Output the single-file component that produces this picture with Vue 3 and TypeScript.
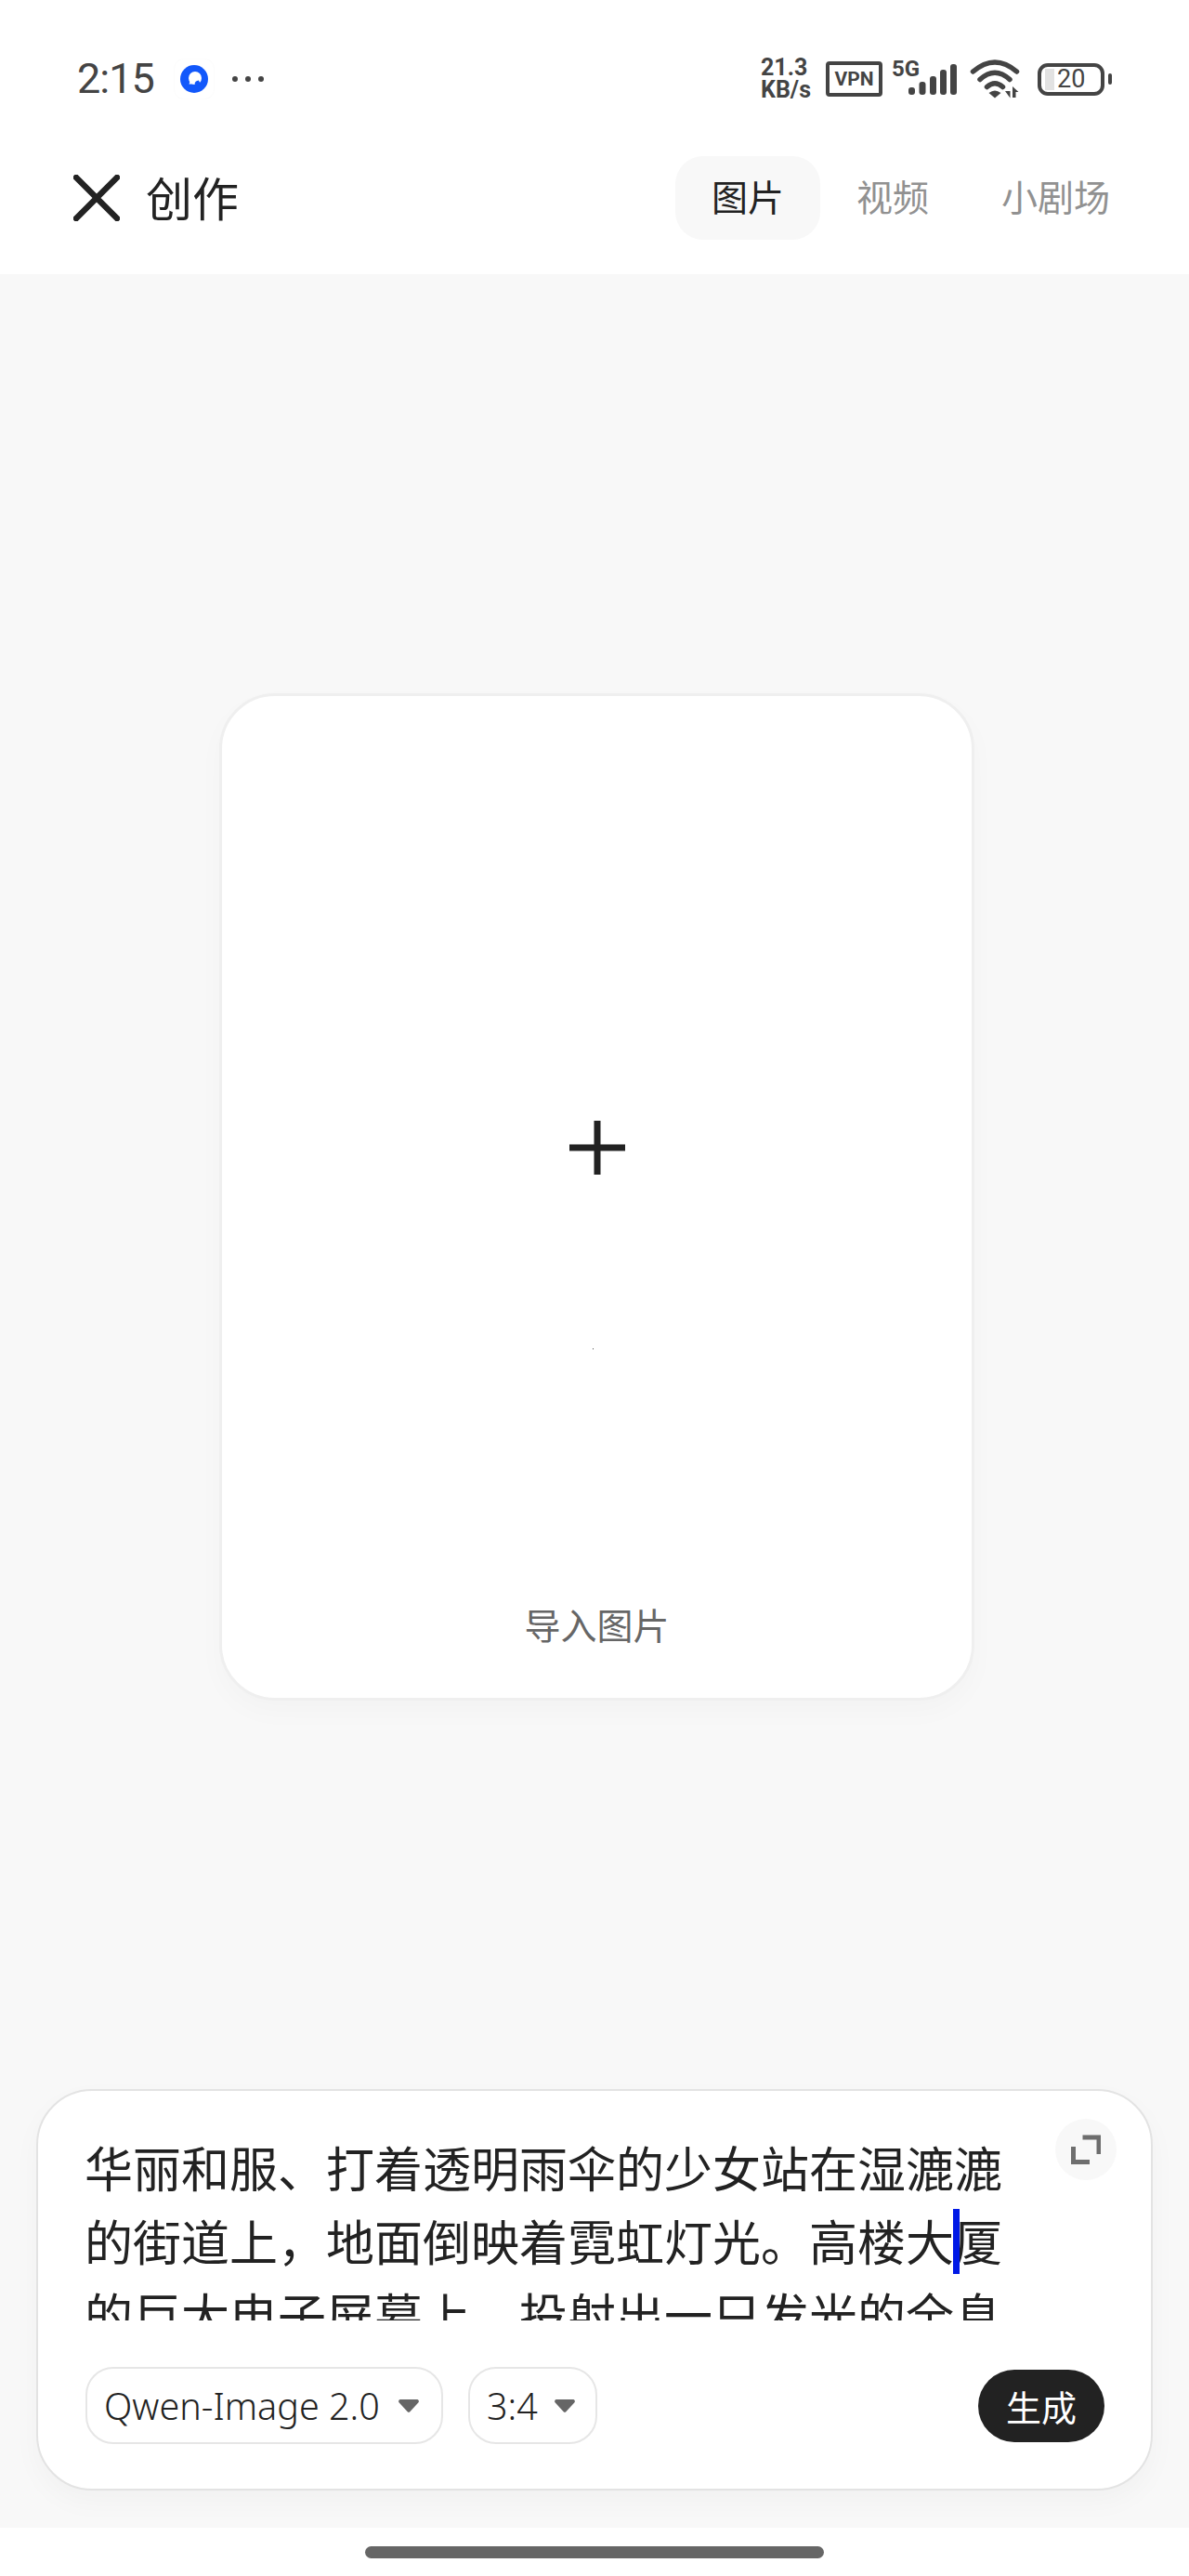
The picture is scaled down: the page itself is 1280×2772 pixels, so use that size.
<template>
  <div class="page">
    <div class="top">
      <div class="status">
        <span class="status__time">2:15</span>
        <span class="status__app">
          <svg width="42" height="42" viewBox="0 0 42 42">
            <circle cx="21" cy="21" r="15" fill="#1258fb" />
            <circle cx="22" cy="20" r="7" fill="#fff" />
            <path d="M15.5 26.5h6.5a3 3 0 0 0 2-4l-6-3z" fill="#fff" />
            <path d="M21.5 26.6c.2-2.4 1.6-3.7 4.4-4.1l2 4-3.5 2z" fill="#1258fb" />
          </svg>
        </span>
        <span class="status__dots"><i></i><i></i><i></i></span>
        <div class="status__right">
          <div class="speed">
            <span>21.3</span>
            <span>KB/s</span>
          </div>
          <div class="vpn">VPN</div>
          <div class="net">
            <span class="net__label">5G</span>
            <svg width="70" height="40" viewBox="0 0 70 40">
              <rect x="18" y="29" width="7" height="8" rx="3" fill="#444" />
              <rect x="29.5" y="23" width="7" height="14" rx="3" fill="#444" />
              <rect x="41" y="17" width="7" height="20" rx="3" fill="#444" />
              <rect x="52" y="10" width="7" height="27" rx="3" fill="#444" />
              <rect x="63" y="4" width="7" height="33" rx="3" fill="#444" />
            </svg>
          </div>
          <svg class="wifi" width="54" height="42" viewBox="0 0 54 42">
            <path d="M3.500 13Q27-7 50.500 13M11 21.500Q27 7 43 21.500M18.500 29.500Q27 22 35.500 29.500" fill="none" stroke="#444" stroke-width="5.500" stroke-linecap="round" />
            <path d="M27 41.500l-6.500-5.500q6.500-5 13 0z" fill="#444" />
            <path d="M38 34h5.500v7.500zM46 29v12h3.500v-6h3z" fill="#444" />
          </svg>
          <div class="battery">
            <div class="battery__body">
              <i class="battery__fill"></i>
              <span>20</span>
            </div>
            <i class="battery__nub"></i>
          </div>
        </div>
      </div>
      <div class="header">
        <svg class="header__close" width="50" height="50" viewBox="0 0 50 50">
          <path d="M3 3l44 44M47 3L3 47" stroke="#222" stroke-width="6.500" stroke-linecap="square" />
        </svg>
        <span class="header__title">创作</span>
        <div class="tabs">
          <span
            v-for="(tab, i) in tabs"
            :key="tab"
            class="tabs__item"
            :class="{ 'tabs__item--active': i === 0 }"
          >{{ tab }}</span>
        </div>
      </div>
    </div>

    <div class="main">
      <div class="upload">
        <svg class="upload__plus" width="60" height="58" viewBox="0 0 60 58">
          <path d="M0 29h60M30 0v58" stroke="#222" stroke-width="7" />
        </svg>
        <i class="upload__speck"></i>
        <span class="upload__label">导入图片</span>
      </div>
    </div>

    <div class="composer">
      <button class="composer__expand">
        <svg width="32" height="32" viewBox="0 0 32 32">
          <path d="M12.500 3H30V21M2.500 13V29.500H20" fill="none" stroke="#6e6e6e" stroke-width="5" />
        </svg>
      </button>
      <div class="composer__text">
        华丽和服、打着透明雨伞的少女站在湿漉漉的街道上，地面倒映着霓虹灯光。高楼大<span class="caret"></span>厦的巨大电子屏幕上，投射出一只发光的全息
      </div>
      <div class="composer__bar">
        <div class="chip chip--model">
          <span>Qwen-Image 2.0</span>
          <svg width="22" height="14" viewBox="0 0 22 14"><path d="M2 0h18a2 2 0 0 1 1.500 3.200l-9 9.800a2 2 0 0 1-3 0l-9-9.800A2 2 0 0 1 2 0z" fill="#666" /></svg>
        </div>
        <div class="chip chip--ratio">
          <span>3:4</span>
          <svg width="22" height="14" viewBox="0 0 22 14"><path d="M2 0h18a2 2 0 0 1 1.500 3.200l-9 9.800a2 2 0 0 1-3 0l-9-9.800A2 2 0 0 1 2 0z" fill="#666" /></svg>
        </div>
        <button class="generate">生成</button>
      </div>
    </div>

    <div class="footer">
      <i class="footer__bar"></i>
    </div>
  </div>
</template>

<script setup lang="ts">
const tabs: string[] = ['图片', '视频', '小剧场']
</script>

<style scoped>
.page {
  width: 1280px;
  height: 2772px;
  display: flex;
  flex-direction: column;
  background: #f8f8f8;
  font-family: "Noto Sans CJK SC", "Noto Sans", sans-serif;
  color: #222;
  overflow: hidden;
}
i {
  display: block;
}
.top {
  height: 295px;
  background: #fff;
  flex-shrink: 0;
}
.status {
  height: 50px;
  padding: 60px 83px 0;
  display: flex;
  align-items: center;
  color: #444;
}
.status__time {
  font-family: Roboto, sans-serif;
  font-size: 45px;
  letter-spacing: -1px;
  line-height: 50px;
  width: 82px;
}
.status__app {
  width: 42px;
  height: 42px;
  margin-left: 23px;
  border-radius: 10px;
  box-shadow: 0 0 0 1px #fcfcfc;
}
.status__app svg {
  display: block;
}
.status__dots {
  display: flex;
  gap: 8px;
  margin-left: 20px;
}
.status__dots i {
  width: 6px;
  height: 6px;
  border-radius: 50%;
  background: #444;
}
.status__right {
  margin-left: auto;
  display: flex;
  align-items: center;
}
.speed {
  width: 56px;
  display: flex;
  flex-direction: column;
  font-family: Roboto, sans-serif;
  font-weight: 700;
  font-size: 25px;
  line-height: 24px;
}
.vpn {
  width: 61px;
  height: 38px;
  margin-left: 14px;
  box-sizing: border-box;
  border: 4px solid #444;
  border-radius: 4px;
  font-family: Roboto, sans-serif;
  font-weight: 700;
  font-size: 21px;
  line-height: 30px;
  text-align: center;
}
.net {
  position: relative;
  width: 70px;
  height: 40px;
  margin-left: 10px;
}
.net svg {
  display: block;
}
.net__label {
  position: absolute;
  left: 0;
  top: -5px;
  font-family: Roboto, sans-serif;
  font-weight: 700;
  font-size: 24px;
  line-height: 28px;
}
.wifi {
  margin-left: 14px;
  display: block;
}
.battery {
  display: flex;
  align-items: center;
  margin-left: 19px;
  gap: 4px;
}
.battery__body {
  position: relative;
  width: 72px;
  height: 35px;
  box-sizing: border-box;
  border: 4px solid #444;
  border-radius: 11px;
  padding-left: 17px;
  font-family: Roboto, sans-serif;
  font-size: 27px;
  line-height: 27px;
}
.battery__fill {
  position: absolute;
  left: 4px;
  top: 2px;
  width: 10px;
  height: 23px;
  background: #e2e2e2;
}
.battery__body span {
  position: relative;
}
.battery__nub {
  width: 4px;
  height: 12px;
  border-radius: 2px;
  background: #444;
}
.header {
  margin-top: 58px;
  height: 90px;
  padding: 0 46px 0 79px;
  display: flex;
  align-items: center;
}
.header__close {
  display: block;
}
.header__title {
  margin: 0 0 5px 28px;
  font-size: 50px;
  line-height: 56px;
}
.tabs {
  margin-left: auto;
  display: flex;
}
.tabs__item {
  height: 90px;
  padding: 0 39px;
  border-radius: 30px;
  font-size: 39px;
  line-height: 85px;
  color: #919191;
}
.tabs__item--active {
  background: #f8f8f8;
  color: #222;
}
.main {
  flex: 1;
  padding: 451px 0 0 5px;
  display: flex;
  justify-content: center;
  align-items: flex-start;
}
.upload {
  width: 813px;
  height: 1084px;
  box-sizing: border-box;
  border: 3px solid #efefef;
  border-radius: 60px;
  background: #fff;
  box-shadow: 0 12px 30px rgba(0, 0, 0, 0.025);
  display: flex;
  flex-direction: column;
  align-items: center;
}
.upload__plus {
  display: block;
  margin-top: 457px;
}
.upload__speck {
  width: 1px;
  height: 1px;
  margin: 187px 8px 0 0;
  background: #444;
}
.upload__label {
  margin-top: 270px;
  font-size: 39px;
  line-height: 50px;
  color: #666;
}
.composer {
  position: relative;
  width: 1202px;
  height: 432px;
  margin: 0 0 40px 39px;
  box-sizing: border-box;
  padding: 42px 50px 48px 50px;
  border: 2px solid #e3e3e3;
  border-radius: 60px;
  background: #fff;
  box-shadow: 0 12px 30px rgba(0, 0, 0, 0.03);
  flex-shrink: 0;
}
.composer__expand {
  position: absolute;
  right: 37px;
  top: 30px;
  width: 66px;
  height: 66px;
  padding: 0;
  border: none;
  border-radius: 50%;
  background: #f8f8f8;
  display: flex;
  align-items: center;
  justify-content: center;
}
.composer__text {
  width: 990px;
  height: 205px;
  overflow: hidden;
  font-size: 52px;
  line-height: 79px;
}
.caret {
  position: absolute;
  width: 7px;
  height: 70px;
  margin: 6px 0 0 -1px;
  background: #0019e6;
}
.composer__bar {
  margin-top: 50px;
  display: flex;
  align-items: center;
}
.chip {
  height: 83px;
  box-sizing: border-box;
  border: 2px solid #e6e6e6;
  border-radius: 30px;
  display: flex;
  align-items: center;
  font-family: "Noto Sans", sans-serif;
  font-weight: 300;
  font-size: 39.500px;
}
.chip--model {
  width: 385px;
  margin-left: 1px;
  padding-left: 18px;
  gap: 20px;
}
.chip--ratio {
  width: 139px;
  margin-left: 27px;
  padding-left: 18px;
  gap: 18px;
}
.generate {
  margin-left: auto;
  width: 136px;
  height: 78px;
  padding: 0;
  border: none;
  border-radius: 39px;
  background: #222;
  color: #fff;
  font-family: inherit;
  font-size: 38px;
}
.footer {
  height: 52px;
  background: #fff;
  flex-shrink: 0;
  padding-top: 20px;
  box-sizing: border-box;
}
.footer__bar {
  width: 494px;
  height: 13px;
  margin-left: 393px;
  border-radius: 7px;
  background: #666;
}
</style>
